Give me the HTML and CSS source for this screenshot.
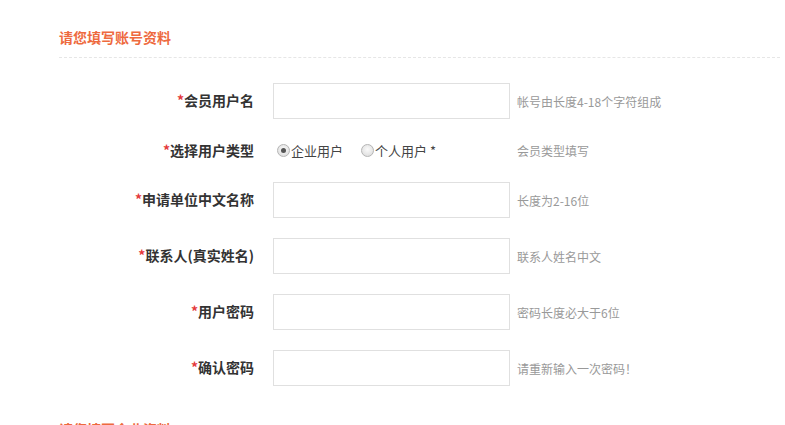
FILE: index.html
```html
<!DOCTYPE html>
<html lang="zh-CN">
<head>
<meta charset="utf-8">
<title>注册</title>
<link rel="stylesheet" href="styles.css">
</head>
<body>
<div class="page">
  <section class="section">
    <h2 class="sec-title">请您填写账号资料</h2>
    <div class="form">
      <div class="row">
        <label class="lbl"><span class="req">*</span>会员用户名</label>
        <input class="ipt" type="text">
        <span class="hint">帐号由长度4-18个字符组成</span>
      </div>
      <div class="row row-radio">
        <label class="lbl"><span class="req">*</span>选择用户类型</label>
        <div class="radios">
          <span class="radio"><span class="dot on"></span>企业用户</span>
          <span class="radio"><span class="dot"></span>个人用户 *</span>
        </div>
        <span class="hint">会员类型填写</span>
      </div>
      <div class="row">
        <label class="lbl"><span class="req">*</span>申请单位中文名称</label>
        <input class="ipt" type="text">
        <span class="hint">长度为2-16位</span>
      </div>
      <div class="row">
        <label class="lbl"><span class="req">*</span>联系人(真实姓名)</label>
        <input class="ipt" type="text">
        <span class="hint">联系人姓名中文</span>
      </div>
      <div class="row">
        <label class="lbl"><span class="req">*</span>用户密码</label>
        <input class="ipt" type="password">
        <span class="hint">密码长度必大于6位</span>
      </div>
      <div class="row">
        <label class="lbl"><span class="req">*</span>确认密码</label>
        <input class="ipt" type="password">
        <span class="hint">请重新输入一次密码！</span>
      </div>
    </div>
  </section>
  <section class="section">
    <h2 class="sec-title">请您填写企业资料</h2>
  </section>
</div>
</body>
</html>
```
FILE: styles.css
```css
html, body {
  margin: 0;
  padding: 0;
  background: #fff;
}
body {
  font-family: "Microsoft YaHei", "Noto Sans CJK SC", "Noto Sans", sans-serif;
  color: #333;
  overflow: hidden;
}
.page {
  padding: 27px 5px 0 59px;
}
.section {
  margin-bottom: 33px;
}
.sec-title {
  margin: 0;
  font-size: 14px;
  line-height: 20px;
  font-weight: bold;
  color: #ee6a3e;
  padding-bottom: 10px;
  border-bottom: 1px dashed #e6e6e6;
}
.form {
  padding-top: 25px;
}
.row {
  display: flex;
  align-items: center;
  margin-bottom: 20px;
  height: 36px;
}
.row-radio {
  height: 23px;
}
.lbl {
  width: 195px;
  flex: none;
  text-align: right;
  font-size: 14px;
  line-height: 18px;
  padding-bottom: 2px;
  font-weight: bold;
  color: #333;
  margin-right: 19px;
}
.req {
  color: #e4393c;
  font-weight: bold;
}
.ipt {
  width: 237px;
  height: 36px;
  box-sizing: border-box;
  border: 1px solid #e0e0e0;
  outline: none;
  padding: 0 8px;
  margin: 0 7px 0 0;
  font-size: 13px;
}
.hint {
  font-size: 12px;
  color: #999;
}
.radios {
  width: 237px;
  margin-right: 7px;
  display: flex;
  align-items: center;
  gap: 18px;
  padding-left: 4px;
  box-sizing: border-box;
  font-size: 13px;
  color: #444;
}
.radio {
  display: flex;
  align-items: center;
}
.dot {
  width: 11px;
  height: 11px;
  border-radius: 50%;
  border: 1px solid #b5b5b5;
  background: radial-gradient(circle at 50% 40%, #fafafa, #d8d8d8);
  margin-right: 1px;
  position: relative;
  flex: none;
}
.dot.on::after {
  content: "";
  position: absolute;
  left: 3px;
  top: 3px;
  width: 5px;
  height: 5px;
  border-radius: 50%;
  background: #555;
}
```
